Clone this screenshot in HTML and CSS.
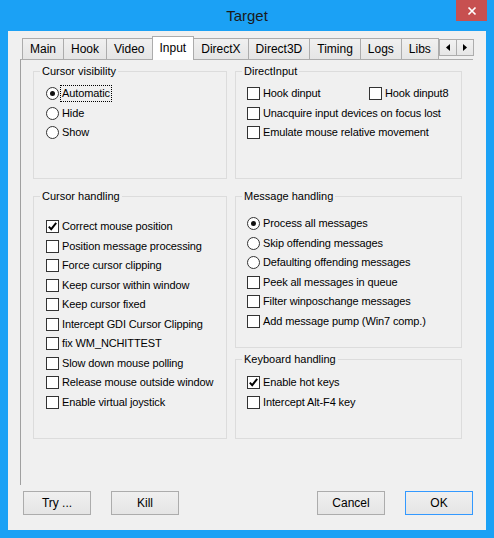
FILE: index.html
```html
<!DOCTYPE html>
<html>
<head>
<meta charset="utf-8">
<link rel="stylesheet" href="styles.css">
</head>
<body>
<div class="window">
  <div class="titlebar">
    <div class="title">Target</div>
    <div class="close">
      <svg width="10" height="10" viewBox="0 0 10 10"><path d="M1.5 1.5 L8.5 8.5 M8.5 1.5 L1.5 8.5" stroke="#fff" stroke-width="1.7" fill="none"/></svg>
    </div>
  </div>
  <div class="client">
    <div class="tabs">
      <div class="tab">Main</div>
      <div class="tab">Hook</div>
      <div class="tab">Video</div>
      <div class="tab active">Input</div>
      <div class="tab">DirectX</div>
      <div class="tab">Direct3D</div>
      <div class="tab">Timing</div>
      <div class="tab">Logs</div>
      <div class="tab">Libs</div>
      <div class="scroller">
        <div class="sbtn"><svg width="4" height="7" viewBox="0 0 4 7"><path d="M4 0 L0 3.5 L4 7 Z" fill="#000"/></svg></div>
        <div class="sbtn"><svg width="4" height="7" viewBox="0 0 4 7"><path d="M0 0 L4 3.5 L0 7 Z" fill="#000"/></svg></div>
      </div>
    </div>
    <div class="panel">
      <div class="grid">
        <div class="group">
          <div class="gtitle">Cursor visibility</div>
          <div class="opts p5">
            <div class="opt"><span class="radio on"></span><span class="lbl focus">Automatic</span></div>
            <div class="opt"><span class="radio"></span><span class="lbl">Hide</span></div>
            <div class="opt"><span class="radio"></span><span class="lbl">Show</span></div>
          </div>
        </div>
        <div class="group">
          <div class="gtitle">DirectInput</div>
          <div class="opts p5 right">
            <div class="opt">
              <div class="pair"><span class="box"></span><span class="lbl">Hook dinput</span></div>
              <div class="pair"><span class="box"></span><span class="lbl">Hook dinput8</span></div>
            </div>
            <div class="opt"><span class="box"></span><span class="lbl">Unacquire input devices on focus lost</span></div>
            <div class="opt"><span class="box"></span><span class="lbl">Emulate mouse relative movement</span></div>
          </div>
        </div>
        <div class="group">
          <div class="gtitle">Cursor handling</div>
          <div class="opts p13">
            <div class="opt"><span class="box checked"><svg width="11" height="11" viewBox="0 0 11 11"><path d="M1.8 5.6 L4.2 8.2 L9.2 1.8" stroke="#000" stroke-width="1.9" fill="none"/></svg></span><span class="lbl">Correct mouse position</span></div>
            <div class="opt"><span class="box"></span><span class="lbl">Position message processing</span></div>
            <div class="opt"><span class="box"></span><span class="lbl">Force cursor clipping</span></div>
            <div class="opt"><span class="box"></span><span class="lbl">Keep cursor within window</span></div>
            <div class="opt"><span class="box"></span><span class="lbl">Keep cursor fixed</span></div>
            <div class="opt"><span class="box"></span><span class="lbl">Intercept GDI Cursor Clipping</span></div>
            <div class="opt"><span class="box"></span><span class="lbl">fix WM_NCHITTEST</span></div>
            <div class="opt"><span class="box"></span><span class="lbl">Slow down mouse polling</span></div>
            <div class="opt"><span class="box"></span><span class="lbl">Release mouse outside window</span></div>
            <div class="opt"><span class="box"></span><span class="lbl">Enable virtual joystick</span></div>
          </div>
        </div>
        <div class="stack">
          <div class="group msg">
            <div class="gtitle">Message handling</div>
            <div class="opts p10 right">
              <div class="opt"><span class="radio on"></span><span class="lbl">Process all messages</span></div>
              <div class="opt"><span class="radio"></span><span class="lbl">Skip offending messages</span></div>
              <div class="opt"><span class="radio"></span><span class="lbl">Defaulting offending messages</span></div>
              <div class="opt"><span class="box"></span><span class="lbl">Peek all messages in queue</span></div>
              <div class="opt"><span class="box"></span><span class="lbl">Filter winposchange messages</span></div>
              <div class="opt"><span class="box"></span><span class="lbl">Add message pump (Win7 comp.)</span></div>
            </div>
          </div>
          <div class="group kbd">
            <div class="gtitle">Keyboard handling</div>
            <div class="opts p6 right">
              <div class="opt"><span class="box checked"><svg width="11" height="11" viewBox="0 0 11 11"><path d="M1.8 5.6 L4.2 8.2 L9.2 1.8" stroke="#000" stroke-width="1.9" fill="none"/></svg></span><span class="lbl">Enable hot keys</span></div>
              <div class="opt"><span class="box"></span><span class="lbl">Intercept Alt-F4 key</span></div>
            </div>
          </div>
        </div>
      </div>
    </div>
    <div class="buttons">
      <div class="btn">Try ...</div>
      <div class="btn">Kill</div>
      <div class="btn push">Cancel</div>
      <div class="btn default">OK</div>
    </div>
  </div>
</div>
</body>
</html>
```
FILE: styles.css
```css
html, body {
  margin: 0;
  padding: 0;
}
body {
  width: 494px;
  height: 538px;
  overflow: hidden;
  background: #1ba1f5;
  font-family: "Liberation Sans", Arial, sans-serif;
  color: #000;
}
.window {
  display: flex;
  flex-direction: column;
  height: 538px;
}
.titlebar {
  height: 31px;
  display: grid;
  grid-template-columns: 1fr auto 1fr;
}
.title {
  grid-column: 2;
  font-size: 15px;
  line-height: 31px;
  color: #1a1a1a;
}
.close {
  grid-column: 3;
  justify-self: end;
  width: 31px;
  height: 21px;
  margin-right: 7px;
  background: #c75050;
  display: flex;
  align-items: center;
  justify-content: center;
  padding-top: 1px;
  box-sizing: border-box;
}
.client {
  margin: 0 8px;
  height: 499px;
  background: #f0f0f0;
  padding-top: 5px;
  box-sizing: border-box;
  display: flex;
  flex-direction: column;
}
.tabs {
  display: flex;
  align-items: flex-end;
  height: 23px;
  padding-left: 14px;
}
.tab {
  height: 21px;
  box-sizing: border-box;
  border: 1px solid #acacac;
  border-bottom: none;
  margin-left: -1px;
  padding: 0 7px;
  font-size: 12px;
  line-height: 21px;
  background: linear-gradient(#f0f0f0, #e5e5e5);
}
.tab:first-child {
  margin-left: 0;
}
.tab.active {
  height: 24px;
  margin-bottom: -1px;
  background: #fff;
  position: relative;
  z-index: 1;
  line-height: 22px;
}
.scroller {
  display: flex;
  align-self: flex-start;
  margin: 3px 13px 0 auto;
}
.sbtn {
  width: 18px;
  height: 17px;
  box-sizing: border-box;
  border: 1px solid #adadad;
  background: linear-gradient(#f2f2f2, #e6e6e6);
  display: flex;
  align-items: center;
  justify-content: center;
}
.sbtn + .sbtn {
  margin-left: -1px;
}
.panel {
  margin-left: 12px;
  width: 453px;
  height: 426px;
  box-sizing: border-box;
  border-top: 1px solid #acacac;
  border-left: 1px solid #a0a0a0;
  padding: 11px 0 0 12px;
}
.grid {
  display: grid;
  grid-template-columns: 194px 227px;
  grid-template-rows: 108px 243px;
  column-gap: 8px;
  row-gap: 17px;
}
.stack {
  display: flex;
  flex-direction: column;
  gap: 11px;
}
.group {
  border: 1px solid #dcdcdc;
  box-sizing: border-box;
}
.group.msg {
  height: 152px;
}
.group.kbd {
  height: 80px;
}
.gtitle {
  width: max-content;
  margin: -7px 0 0 6px;
  padding: 0 2px;
  background: #f0f0f0;
  font-size: 11px;
  line-height: 13px;
}
.opts {
  padding-left: 12px;
  font-size: 11px;
  letter-spacing: -0.12px;
}
.opts.right {
  padding-left: 11px;
}
.p5 { padding-top: 6px; }
.p6 { padding-top: 7px; }
.p10 { padding-top: 11px; }
.p13 { padding-top: 14px; }
.opt {
  display: flex;
  align-items: center;
  height: 19.5px;
}
.pair {
  display: flex;
  align-items: center;
  flex: none;
}
.pair:first-child {
  width: 122px;
}
.box, .radio {
  width: 13px;
  height: 13px;
  box-sizing: border-box;
  border: 1px solid #333;
  background: #fff;
  margin-right: 3px;
  flex: none;
  display: flex;
  align-items: center;
  justify-content: center;
}
.radio {
  border-radius: 50%;
}
.radio.on::after {
  content: "";
  width: 5px;
  height: 5px;
  border-radius: 50%;
  background: #111;
}
.lbl {
  white-space: nowrap;
  line-height: 13px;
}
.lbl.focus {
  outline: 1px dotted #000;
  outline-offset: 1px;
}
.buttons {
  display: flex;
  gap: 20px;
  margin-top: 6px;
  padding: 0 13px 0 15px;
}
.btn {
  width: 68px;
  height: 24px;
  box-sizing: border-box;
  border: 1px solid #acacac;
  background: linear-gradient(#f0f0f0, #e5e5e5);
  font-size: 12px;
  line-height: 22px;
  text-align: center;
}
.btn.push {
  margin-left: auto;
}
.btn.default {
  border-color: #3399ff;
}
```
